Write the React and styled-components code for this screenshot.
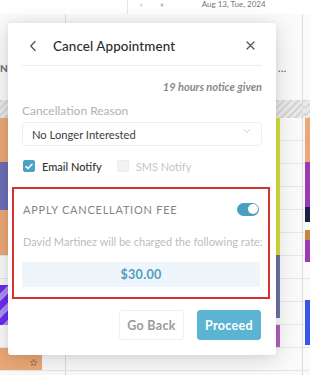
import React from "react";
import styled, { createGlobalStyle } from "styled-components";

const Global = createGlobalStyle`
  html, body { margin: 0; padding: 0; background: #fafafa; }
  body { font-family: "Lato", "Open Sans", sans-serif; }
  * { box-sizing: border-box; }
`;

const Page = styled.div`
  position: relative;
  width: 310px;
  height: 375px;
  overflow: hidden;
  background: #fafafa;
`;

const TopBar = styled.div`
  height: 14px;
  background: #fff;
  display: flex;
`;

const NavBox = styled.div`
  margin-left: 127px;
  flex: 1;
  border-left: 1px solid #e4e4e4;
  display: flex;
  align-items: flex-start;
  gap: 18px;
  padding-left: 12px;
  font-size: 8px;
  color: #777;
  line-height: 8px;
  white-space: nowrap;
  overflow: hidden;
`;

const Calendar = styled.div`
  display: grid;
  grid-template-columns: 66px 210px 27px 2px 5px;
  height: 361px;
`;

const Column = styled.div`
  display: flex;
  flex-direction: column;
  border-right: ${(p) => (p.$line ? "1px solid #dcdcdc" : "none")};
  background-image: repeating-linear-gradient(
    to bottom,
    transparent 0 22px,
    #e6e6e6 22px 23px
  );
  background-position: 0 104px;
  background-color: #fafafa;
`;

const Head = styled.div`
  height: 86px;
  background: #fafafa;
  font-size: 10px;
  font-weight: 700;
  color: #666;
  padding-top: 48px;
  padding-left: ${(p) => p.$pl || 0}px;
  letter-spacing: 0.5px;
  white-space: nowrap;
  overflow: hidden;
`;

const Hatch = styled.div`
  height: 18px;
  background: repeating-linear-gradient(
    135deg,
    #d4d4d4 0 2px,
    #e9e9e9 2px 5px
  );
`;

const Event = styled.div`
  height: ${(p) => p.$h}px;
  width: ${(p) => (p.$w ? p.$w + "px" : "100%")};
  background: ${(p) => p.$bg || "transparent"};
  flex-shrink: 0;
  display: flex;
  align-items: center;
  justify-content: flex-end;
  padding-right: 4px;
`;

const Star = styled.span`
  font-size: 10px;
  color: #222;
  line-height: 1;
  margin-top: 6px;
`;

const Modal = styled.div`
  position: absolute;
  top: 23px;
  left: 8px;
  width: 268px;
  height: 332px;
  background: #fff;
  border-radius: 3px;
  box-shadow: 0 4px 22px rgba(0, 0, 0, 0.16), 0 0 6px rgba(0, 0, 0, 0.05);
  display: flex;
  flex-direction: column;
  padding-bottom: 14px;
`;

const Header = styled.div`
  margin: 0 14px;
  height: 43px;
  padding: 3px 7px 0 7px;
  border-bottom: 1px solid #eeeeee;
  display: flex;
  align-items: center;
`;

const Title = styled.div`
  flex: 1;
  margin-left: 16px;
  font-size: 13.4px;
  font-weight: 500;
  color: #2b2b2b;
  letter-spacing: 0.1px;
`;

const IconBtn = styled.span`
  display: flex;
  align-items: center;
  color: #555;
`;

const Body = styled.div`
  padding: 0 14px;
  display: flex;
  flex-direction: column;
`;

const Notice = styled.div`
  margin-top: 14px;
  text-align: right;
  font-size: 11px;
  line-height: 14px;
  font-style: italic;
  font-weight: 700;
  color: #8a8a8a;
`;

const Label = styled.div`
  margin-top: 10px;
  font-size: 12px;
  line-height: 14px;
  color: #b2b2b2;
`;

const Select = styled.div`
  margin-top: 4px;
  height: 24px;
  border: 1px solid #efefef;
  border-radius: 3px;
  display: flex;
  align-items: center;
  justify-content: space-between;
  padding: 0 10px 0 9px;
  font-size: 11.2px;
  color: #3c3c3c;
`;

const CheckRow = styled.div`
  margin-top: 13px;
  height: 14px;
  display: flex;
  align-items: center;
`;

const Check = styled.span`
  width: 12px;
  height: 12px;
  border-radius: 2px;
  background: ${(p) => (p.$on ? "#4ba2c3" : "#f3f3f3")};
  border: 1px solid ${(p) => (p.$on ? "#4ba2c3" : "#ececec")};
  display: flex;
  align-items: center;
  justify-content: center;
  margin-left: ${(p) => p.$ml || 1}px;
`;

const CheckLabel = styled.span`
  margin-left: 7px;
  font-size: 11px;
  font-weight: ${(p) => (p.$muted ? 400 : 500)};
  color: ${(p) => (p.$muted ? "#c6c6c6" : "#333")};
`;

const FeeBox = styled.div`
  margin: 14px -8px 0 -10px;
  border: 2px solid #d8322c;
  padding: 13px 8px 10px 8px;
  display: flex;
  flex-direction: column;
`;

const FeeRow = styled.div`
  height: 14px;
  display: flex;
  align-items: center;
  justify-content: space-between;
  padding-left: 1px;
`;

const FeeTitle = styled.span`
  font-size: 11px;
  letter-spacing: 0.75px;
  color: #858585;
`;

const Toggle = styled.span`
  width: 22px;
  height: 13px;
  border-radius: 7px;
  background: #4a9fc0;
  display: flex;
  align-items: center;
  justify-content: flex-end;
  padding: 0 1.5px;
  margin-right: 1px;
  &::after {
    content: "";
    width: 10px;
    height: 10px;
    border-radius: 50%;
    background: #fff;
  }
`;

const Desc = styled.div`
  margin-top: 19px;
  font-size: 11px;
  line-height: 14px;
  color: #bdbdbd;
  padding-left: 1px;
  white-space: nowrap;
`;

const Price = styled.div`
  margin-top: 13px;
  height: 25px;
  background: #eef6fb;
  display: flex;
  align-items: center;
  justify-content: center;
  font-size: 12.5px;
  font-weight: 700;
  color: #4f9fbd;
  letter-spacing: 0.3px;
`;

const Actions = styled.div`
  margin-top: 11px;
  display: flex;
  justify-content: flex-end;
  gap: 13px;
  padding-right: 1px;
`;

const Button = styled.button`
  height: 30px;
  width: ${(p) => p.$w}px;
  border-radius: 3px;
  font-family: inherit;
  font-size: 12.5px;
  font-weight: 700;
  border: 1px solid ${(p) => (p.$primary ? "#5bb4d1" : "#efefef")};
  background: ${(p) => (p.$primary ? "#5bb4d1" : "#fff")};
  color: ${(p) => (p.$primary ? "#fff" : "#9a9a9a")};
  padding: 0;
  letter-spacing: 0.3px;
`;

const Chevron = ({ dir = "left", size = 8, color = "#555" }) => (
  <svg width={size} height={size * 1.5} viewBox="0 0 8 12" fill="none">
    {dir === "left" ? (
      <path d="M6 1.5L1.8 6 6 10.5" stroke={color} strokeWidth="1.3" strokeLinecap="round" strokeLinejoin="round" />
    ) : (
      <path d="M1 1.5L4 4.5 7 1.5" stroke={color} strokeWidth="1" strokeLinecap="round" strokeLinejoin="round" />
    )}
  </svg>
);

const CloseIcon = () => (
  <svg width="9" height="9" viewBox="0 0 9 9">
    <path d="M1 1L8 8M8 1L1 8" stroke="#555" strokeWidth="1.3" strokeLinecap="round" />
  </svg>
);

const Tick = () => (
  <svg width="8" height="7" viewBox="0 0 8 7">
    <path d="M1 3.6L3 5.5 7 1.3" stroke="#fff" strokeWidth="1.5" fill="none" strokeLinecap="round" strokeLinejoin="round" />
  </svg>
);

const striped = "repeating-linear-gradient(135deg, #6b2cf0 0 6px, #a98ef2 6px 12px)";

export default function App() {
  return (
    <Page>
      <Global />
      <TopBar>
        <NavBox>
          <span>‹</span>
          <span>«</span>
          <span style={{ marginLeft: 20 }}>Aug 13, Tue, 2024</span>
        </NavBox>
      </TopBar>
      <Calendar>
        <Column $line>
          <Head>N</Head>
          <Hatch />
          <Event $h={44} $w={42} $bg="#eba877" />
          <Event $h={48} $w={42} $bg="#6c6fb6" />
          <Event $h={45} $w={42} $bg="#eba877" />
          <Event $h={30} $w={42} />
          <Event $h={40} $w={42} $bg={striped} />
          <Event $h={23} $w={42} />
          <Event $h={22} $w={42} $bg="#eba877">
            <Star>☆</Star>
          </Event>
        </Column>
        <Column>
          <Head />
          <Hatch />
        </Column>
        <Column $line>
          <Head $pl={2}>...</Head>
          <Hatch />
          <Event $h={137} $w={4} $bg="#d8e23a" />
          <Event $h={63} $w={4} $bg="#6a74a8" />
          <Event $h={7} $w={4} />
          <Event $h={22} $w={4} $bg="#b45fc4" />
        </Column>
        <Column>
          <Head />
          <Hatch />
        </Column>
        <Column>
          <Head />
          <Hatch />
          <Event $h={44} $bg="#eba877" />
          <Event $h={45} $bg="#9a3bb5" />
          <Event $h={15} $bg="#1c1f4a" />
          <Event $h={8} />
          <Event $h={10} $bg="#c98445" />
          <Event $h={22} $bg="#9a3bb5" />
          <Event $h={38} />
          <Event $h={45} $bg="#3a56e6" />
        </Column>
      </Calendar>

      <Modal>
        <Header>
          <IconBtn>
            <Chevron />
          </IconBtn>
          <Title>Cancel Appointment</Title>
          <IconBtn>
            <CloseIcon />
          </IconBtn>
        </Header>
        <Body>
          <Notice>19 hours notice given</Notice>
          <Label>Cancellation Reason</Label>
          <Select>
            <span>No Longer Interested</span>
            <Chevron dir="down" size={8} color="#c8c8c8" />
          </Select>
          <CheckRow>
            <Check $on>
              <Tick />
            </Check>
            <CheckLabel>Email Notify</CheckLabel>
            <Check $ml={15} />
            <CheckLabel $muted>SMS Notify</CheckLabel>
          </CheckRow>
          <FeeBox>
            <FeeRow>
              <FeeTitle>APPLY CANCELLATION FEE</FeeTitle>
              <Toggle />
            </FeeRow>
            <Desc>David Martinez will be charged the following rate:</Desc>
            <Price>$30.00</Price>
          </FeeBox>
          <Actions>
            <Button $w={65}>Go Back</Button>
            <Button $w={64} $primary>
              Proceed
            </Button>
          </Actions>
        </Body>
      </Modal>
    </Page>
  );
}
